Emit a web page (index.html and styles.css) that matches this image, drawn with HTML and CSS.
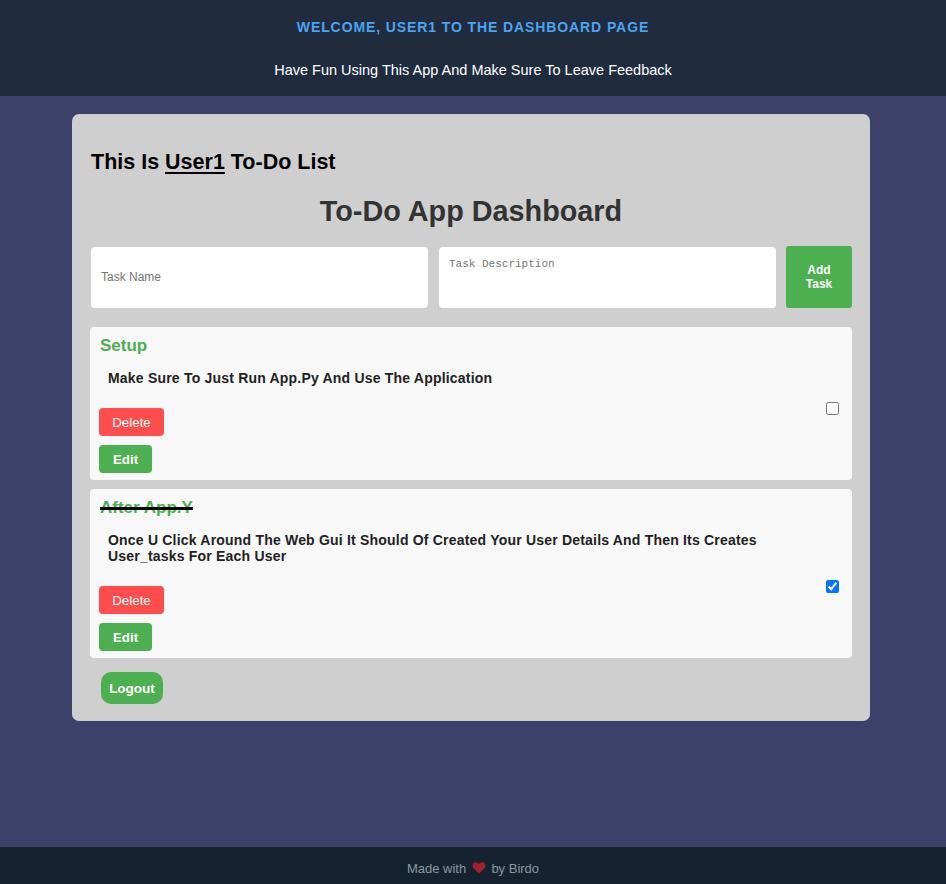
FILE: index.html
```html
<!DOCTYPE html>
<html>
<head>
<meta charset="utf-8">
<title>Dashboard</title>
<link rel="stylesheet" href="styles.css">
</head>
<body>
<header class="top">
  <h1 class="welcome">WELCOME, USER1 TO THE DASHBOARD PAGE</h1>
  <p class="sub">Have Fun Using This App And Make Sure To Leave Feedback</p>
</header>
<main class="page">
  <section class="panel">
    <h2 class="owner">This Is <u>User1</u> To-Do List</h2>
    <h1 class="title">To-Do App Dashboard</h1>
    <form class="add-row">
      <input class="field" type="text" placeholder="Task Name">
      <textarea class="field area" placeholder="Task Description"></textarea>
      <button type="button" class="btn add">Add<br>Task</button>
    </form>
    <div class="tasks">
      <div class="task">
        <h3 class="task-name">Setup</h3>
        <p class="task-desc">Make Sure To Just Run App.Py And Use The Application</p>
        <div class="task-foot">
          <div class="actions">
            <button type="button" class="btn del">Delete</button>
            <button type="button" class="btn edit">Edit</button>
          </div>
          <input class="check" type="checkbox">
        </div>
      </div>
      <div class="task">
        <h3 class="task-name done">After App.Y</h3>
        <p class="task-desc">Once U Click Around The Web Gui It Should Of Created Your User Details And Then Its Creates User_tasks For Each User</p>
        <div class="task-foot">
          <div class="actions">
            <button type="button" class="btn del">Delete</button>
            <button type="button" class="btn edit">Edit</button>
          </div>
          <input class="check" type="checkbox" checked>
        </div>
      </div>
    </div>
    <button type="button" class="btn logout">Logout</button>
  </section>
</main>
<footer class="foot">Made with <svg class="heart" width="14" height="12" viewBox="0 0 16 14"><path d="M8 13.5 L1.6 7.2 C-0.3 5.2 0.2 1.8 2.6 0.8 C4.6 -0.1 6.8 0.7 8 2.6 C9.2 0.7 11.4 -0.1 13.4 0.8 C15.8 1.8 16.3 5.2 14.4 7.2 Z" fill="#a3202c"/></svg> by Birdo</footer>
</body>
</html>
```

FILE: styles.css
```css
* { box-sizing: border-box; }
html, body { height: 100%; }
body {
  margin: 0;
  font-family: "Liberation Sans", Arial, sans-serif;
  background: #3d416a;
  display: flex;
  flex-direction: column;
}
.top {
  background: #202c3e;
  height: 96px;
  text-align: center;
  padding-top: 19px;
}
.welcome {
  margin: 0;
  color: #4aa4f2;
  font-size: 14px;
  font-weight: bold;
  letter-spacing: 0.9px;
  line-height: 16px;
}
.sub {
  margin: 27px 0 0;
  color: #ffffff;
  font-size: 14.5px;
  line-height: 16px;
}
.page {
  flex: 1;
  padding: 18px 0 0;
}
.panel {
  width: 798px;
  margin: 0 0 0 calc(50% - 401px);
  background: #cfcfcf;
  border-radius: 7px;
  padding: 36px 18px 17px 18px;
}
.owner {
  margin: 0 0 0 1px;
  font-size: 21.5px;
  line-height: 24px;
  color: #000;
}
.owner u { text-decoration-thickness: 2px; text-underline-offset: 3px; }
.title {
  margin: 20px 0 0;
  text-align: center;
  font-size: 28.8px;
  line-height: 34px;
  color: #333333;
}
.add-row {
  display: flex;
  gap: 10px;
  margin: 18px 0 0;
  align-items: center;
}
.field {
  flex: none;
  width: 337px;
  height: 61px;
  border: none;
  border-radius: 4px;
  background: #fff;
  padding: 10px 10px;
  font-family: "Liberation Sans", Arial, sans-serif;
  font-size: 12px;
  margin: 0 0 0 1px;
}
.field::placeholder { color: #757575; }
.area {
  font-family: "Liberation Mono", "DejaVu Sans Mono", monospace;
  font-size: 11px;
  padding: 11px 10px 9px;
  resize: none;
}
.btn {
  border: none;
  color: #fff;
  font-family: "Liberation Sans", Arial, sans-serif;
  cursor: pointer;
}
.add {
  flex: none;
  width: 66px;
  height: 62px;
  background: #4caf50;
  border-radius: 3px;
  font-size: 12px;
  font-weight: bold;
  line-height: 14px;
  padding: 0;
}
.tasks {
  display: flex;
  flex-direction: column;
  gap: 9px;
  margin-top: 19px;
}
.task {
  background: #f8f8f8;
  border-radius: 4px;
  padding: 9px 13px 7px 9px;
}
.task-name {
  margin: 0 0 0 1px;
  color: #4caf50;
  font-size: 17px;
  line-height: 20px;
}
.task-name.done {
  text-decoration: line-through;
  text-decoration-color: #000;
  text-decoration-thickness: 3px;
}
.task-desc {
  margin: 14px 0 0 9px;
  font-size: 14px;
  font-weight: bold;
  color: #222;
  letter-spacing: 0.2px;
  line-height: 16px;
  max-width: 690px;
}
.task-foot {
  display: flex;
  justify-content: space-between;
  align-items: flex-start;
  margin-top: 22px;
}
.actions {
  display: flex;
  flex-direction: column;
  align-items: flex-start;
  gap: 9px;
}
.del {
  background: #ff4d4d;
  border-radius: 4px;
  height: 28px;
  width: 65px;
  font-size: 13.33px;
}
.edit {
  background: #4caf50;
  border-radius: 4px;
  height: 28px;
  width: 53px;
  font-size: 13.33px;
  font-weight: bold;
}
.check {
  width: 13px;
  height: 13px;
  margin: -6px 0 0 0;
  accent-color: #0075ff;
}
.logout {
  margin: 14px 0 0 11px;
  background: #4caf50;
  border-radius: 10px;
  height: 32px;
  width: 62px;
  font-size: 13.5px;
  font-weight: bold;
}
.foot {
  background: #14232f;
  height: 37px;
  text-align: center;
  color: #8b98a3;
  font-size: 13px;
  line-height: 16px;
  padding-top: 14px;
}
.heart { vertical-align: -1px; margin: 0 2px; }
```
